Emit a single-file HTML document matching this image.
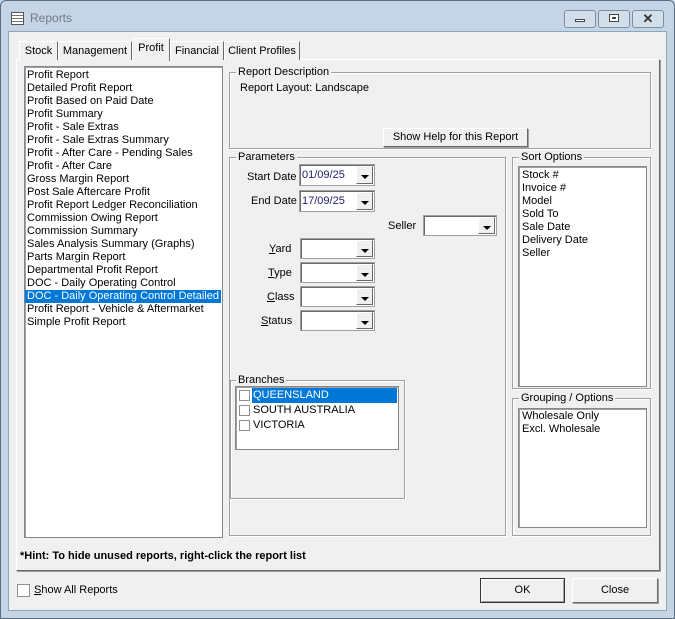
<!DOCTYPE html>
<html><head><style>
*{box-sizing:border-box;margin:0;padding:0}
body{width:675px;height:619px;overflow:hidden;background:#c5d5e6;font-family:"Liberation Sans",sans-serif;font-size:11px;color:#000;position:relative}
.a{position:absolute}
.t{position:absolute;white-space:nowrap;line-height:13px}
.client{left:8px;top:31px;width:659px;height:580px;background:#f0f0f0;border:1px solid #8ea5be}
.sunk{background:#fff;border:1px solid #828790;box-shadow:inset 1px 1px 0 #a0a0a0}
.grp{border:1px solid #a0a0a0;box-shadow:inset 1px 1px 0 #fff,1px 1px 0 #fff}
.gl{position:absolute;background:#f0f0f0;padding:0 2px;line-height:12px;top:-7px;left:6px}
.dd{position:absolute;background:#fff;border:1px solid #a0a0a0;box-shadow:inset 1px 1px 0 #696969}
.dd .b{position:absolute;right:1px;top:1px;bottom:1px;width:17px;background:#f0f0f0;border:1px solid #fff;border-right-color:#696969;border-bottom-color:#696969}
.dd .b:after{content:"";position:absolute;left:4px;top:8px;border:4px solid transparent;border-top:4px solid #000;border-bottom:0}
.btn{position:absolute;background:#f0f0f0;border:1px solid #fff;border-right-color:#696969;border-bottom-color:#696969;box-shadow:1px 1px 0 #a0a0a0;text-align:center}
.tab{position:absolute;top:41px;height:19px;border:1px solid #fff;border-right-color:#696969;border-bottom:none;text-align:center;line-height:18px;background:#f0f0f0}
.cb{position:absolute;width:11px;height:11px;border:1px solid #8f8f8f;background:#fff}
.sel{background:#0078d7;color:#fff}
</style></head><body>
<div class="a" style="left:0;top:0;width:675px;height:619px;border:1px solid #5d6d80;border-radius:6px 6px 0 0"></div>
<div class="a" style="left:11px;top:12px;width:13px;height:13px;border:1px solid #555;background:repeating-linear-gradient(#fff 0 2px,#777 2px 3px)"></div>
<div class="t" style="left:30px;top:12px;font-size:12px;color:#6d7a8a">Reports</div>
<div class="a" style="left:564px;top:10px;width:32px;height:18px;border:1px solid #7c8da2;border-radius:3px;background:#d2deea"></div>
<div class="a" style="left:575px;top:19px;width:10px;height:3px;border:1px solid #444;background:#fff"></div>
<div class="a" style="left:598px;top:10px;width:32px;height:18px;border:1px solid #7c8da2;border-radius:3px;background:#d2deea"></div>
<div class="a" style="left:609px;top:14px;width:10px;height:8px;border:1px solid #444;background:#fff;box-shadow:inset 0 0 0 2px #fff,inset 0 0 0 3px #444"></div>
<div class="a" style="left:632px;top:10px;width:32px;height:18px;border:1px solid #7c8da2;border-radius:3px;background:#d2deea;text-align:center;font-size:13px;line-height:15px;color:#333;font-weight:bold">✕</div>
<div class="a client"></div>
<div class="a" style="left:16px;top:59px;width:644px;height:512px;border:1px solid #fff;border-right-color:#696969;border-bottom-color:#696969;box-shadow:1px 1px 0 #a0a0a0"></div>
<div class="tab" style="left:19px;width:39px">Stock</div>
<div class="tab" style="left:58px;width:74px">Management</div>
<div class="tab" style="left:170px;width:54px">Financial</div>
<div class="tab" style="left:224px;width:76px">Client Profiles</div>
<div class="tab" style="left:132px;top:38px;height:23px;width:38px;line-height:19px">Profit</div>
<div class="a sunk" style="left:24px;top:66px;width:199px;height:472px"></div>
<div class="a" style="left:26px;top:69px">
<div class="t" style="left:1px;top:0">Profit Report</div>
<div class="t" style="left:1px;top:13px">Detailed Profit Report</div>
<div class="t" style="left:1px;top:26px">Profit Based on Paid Date</div>
<div class="t" style="left:1px;top:39px">Profit Summary</div>
<div class="t" style="left:1px;top:52px">Profit - Sale Extras</div>
<div class="t" style="left:1px;top:65px">Profit - Sale Extras Summary</div>
<div class="t" style="left:1px;top:78px">Profit - After Care - Pending Sales</div>
<div class="t" style="left:1px;top:91px">Profit - After Care</div>
<div class="t" style="left:1px;top:104px">Gross Margin Report</div>
<div class="t" style="left:1px;top:117px">Post Sale Aftercare Profit</div>
<div class="t" style="left:1px;top:130px">Profit Report Ledger Reconciliation</div>
<div class="t" style="left:1px;top:143px">Commission Owing Report</div>
<div class="t" style="left:1px;top:156px">Commission Summary</div>
<div class="t" style="left:1px;top:169px">Sales Analysis Summary (Graphs)</div>
<div class="t" style="left:1px;top:182px">Parts Margin Report</div>
<div class="t" style="left:1px;top:195px">Departmental Profit Report</div>
<div class="t" style="left:1px;top:208px">DOC - Daily Operating Control</div>
<div class="t sel" style="left:-1px;top:221px;width:196px;padding-left:2px">DOC - Daily Operating Control Detailed</div>
<div class="t" style="left:1px;top:234px">Profit Report - Vehicle &amp; Aftermarket</div>
<div class="t" style="left:1px;top:247px">Simple Profit Report</div>
</div>
<div class="a grp" style="left:229px;top:72px;width:422px;height:77px"><div class="gl">Report Description</div></div>
<div class="t" style="left:240px;top:82px">Report Layout: Landscape</div>
<div class="btn" style="left:383px;top:128px;width:145px;height:19px;line-height:16px">Show Help for this Report</div>
<div class="a grp" style="left:229px;top:157px;width:277px;height:379px"><div class="gl">Parameters</div></div>
<div class="t" style="left:247px;top:171px">Start Date</div>
<div class="dd" style="left:299px;top:164px;width:76px;height:22px"><div class="t" style="left:2px;top:4px;color:#202070">01/09/25</div><div class="b"></div></div>
<div class="t" style="left:251px;top:195px">End Date</div>
<div class="dd" style="left:299px;top:190px;width:76px;height:22px"><div class="t" style="left:2px;top:4px;color:#202070">17/09/25</div><div class="b"></div></div>
<div class="t" style="left:388px;top:220px">Seller</div>
<div class="dd" style="left:423px;top:215px;width:74px;height:21px"><div class="b"></div></div>
<div class="t" style="left:269px;top:243px"><u>Y</u>ard</div>
<div class="dd" style="left:300px;top:238px;width:75px;height:21px"><div class="b"></div></div>
<div class="t" style="left:268px;top:267px"><u>T</u>ype</div>
<div class="dd" style="left:300px;top:262px;width:75px;height:21px"><div class="b"></div></div>
<div class="t" style="left:267px;top:291px"><u>C</u>lass</div>
<div class="dd" style="left:300px;top:286px;width:75px;height:21px"><div class="b"></div></div>
<div class="t" style="left:261px;top:315px"><u>S</u>tatus</div>
<div class="dd" style="left:300px;top:310px;width:75px;height:21px"><div class="b"></div></div>
<div class="a grp" style="left:230px;top:380px;width:175px;height:119px"><div class="gl" style="left:5px">Branches</div></div>
<div class="a sunk" style="left:235px;top:386px;width:164px;height:64px"></div>
<div class="t sel" style="left:252px;top:388px;width:145px;height:15px;padding-left:1px;line-height:14px">QUEENSLAND</div>
<div class="cb" style="left:239px;top:390px"></div>
<div class="t" style="left:253px;top:404px">SOUTH AUSTRALIA</div>
<div class="cb" style="left:239px;top:405px"></div>
<div class="t" style="left:253px;top:419px">VICTORIA</div>
<div class="cb" style="left:239px;top:420px"></div>
<div class="a grp" style="left:512px;top:157px;width:139px;height:232px"><div class="gl">Sort Options</div></div>
<div class="a sunk" style="left:518px;top:166px;width:129px;height:221px"></div>
<div class="a" style="left:522px;top:169px">
<div class="t" style="top:0">Stock #</div>
<div class="t" style="top:13px">Invoice #</div>
<div class="t" style="top:26px">Model</div>
<div class="t" style="top:39px">Sold To</div>
<div class="t" style="top:52px">Sale Date</div>
<div class="t" style="top:65px">Delivery Date</div>
<div class="t" style="top:78px">Seller</div>
</div>
<div class="a grp" style="left:512px;top:398px;width:139px;height:138px"><div class="gl">Grouping / Options</div></div>
<div class="a sunk" style="left:518px;top:408px;width:129px;height:120px"></div>
<div class="t" style="left:522px;top:410px">Wholesale Only</div>
<div class="t" style="left:522px;top:423px">Excl. Wholesale</div>
<div class="t" style="left:20px;top:550px;font-weight:bold">*Hint: To hide unused reports, right-click the report list</div>
<div class="cb" style="left:17px;top:584px;width:13px;height:13px"></div>
<div class="t" style="left:34px;top:584px"><u>S</u>how All Reports</div>
<div class="btn" style="left:480px;top:578px;width:85px;height:25px;line-height:22px;border:1px solid #333;box-shadow:inset 1px 1px 0 #fff,inset -1px -1px 0 #a0a0a0">OK</div>
<div class="btn" style="left:572px;top:578px;width:86px;height:25px;line-height:22px">Close</div>
</body></html>
